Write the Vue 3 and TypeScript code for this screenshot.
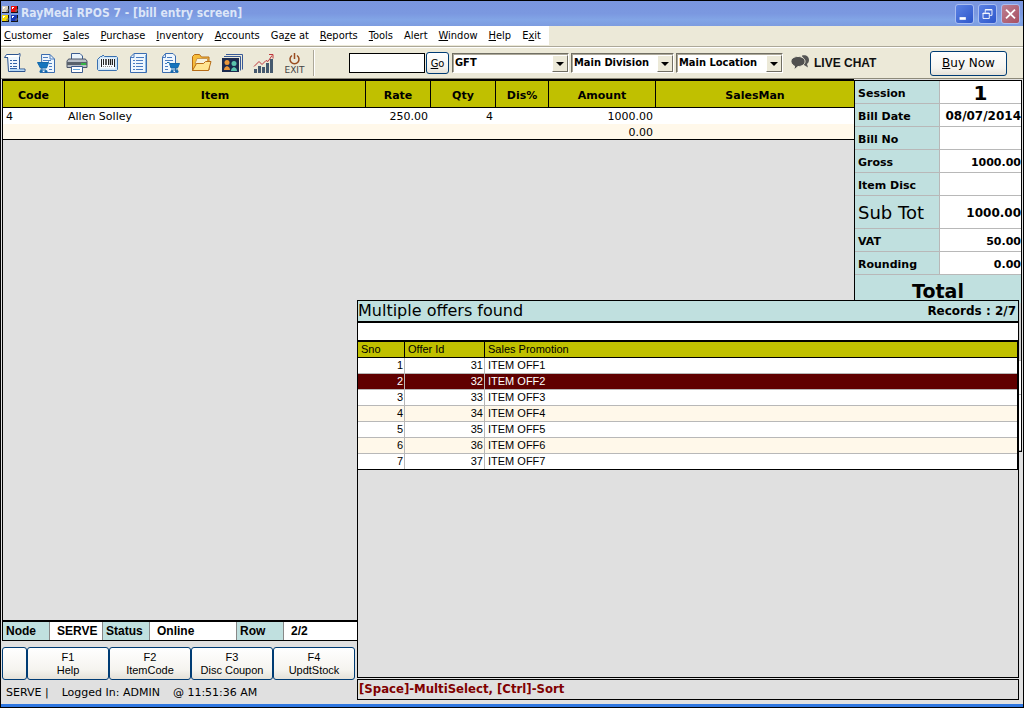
<script setup lang="ts">
import { ref } from 'vue'

interface MenuItem { before: string; key: string; after: string }
interface BillLine { code: string; item: string; rate: string; qty: string; dis: string; amount: string; salesman: string }
interface SummaryRow { label: string; value: string; kind: string }
interface Offer { sno: number; id: number; name: string }

const menu: MenuItem[] = [
  { before: '', key: 'C', after: 'ustomer' },
  { before: '', key: 'S', after: 'ales' },
  { before: '', key: 'P', after: 'urchase' },
  { before: '', key: 'I', after: 'nventory' },
  { before: '', key: 'A', after: 'ccounts' },
  { before: 'Ga', key: 'z', after: 'e at' },
  { before: '', key: 'R', after: 'eports' },
  { before: '', key: 'T', after: 'ools' },
  { before: 'Alert', key: '', after: '' },
  { before: '', key: 'W', after: 'indow' },
  { before: '', key: 'H', after: 'elp' },
  { before: 'E', key: 'x', after: 'it' },
]

const lines: BillLine[] = [
  { code: '4', item: 'Allen Solley', rate: '250.00', qty: '4', dis: '', amount: '1000.00', salesman: '' },
  { code: '', item: '', rate: '', qty: '', dis: '', amount: '0.00', salesman: '' },
]

const summary: SummaryRow[] = [
  { label: 'Session', value: '1', kind: 'session' },
  { label: 'Bill Date', value: '08/07/2014', kind: 'date' },
  { label: 'Bill No', value: '', kind: '' },
  { label: 'Gross', value: '1000.00', kind: '' },
  { label: 'Item Disc', value: '', kind: '' },
  { label: 'Sub Tot', value: '1000.00', kind: 'subtotal' },
  { label: 'VAT', value: '50.00', kind: '' },
  { label: 'Rounding', value: '0.00', kind: '' },
]

const offers: Offer[] = [1, 2, 3, 4, 5, 6, 7].map((n) => ({ sno: n, id: 30 + n, name: `ITEM OFF${n}` }))
const selected = ref(2)
const search = ref('')
const keys = [
  { key: 'F1', label: 'Help' },
  { key: 'F2', label: 'ItemCode' },
  { key: 'F3', label: 'Disc Coupon' },
  { key: 'F4', label: 'UpdtStock' },
]
</script>

<template>
  <div class="window">
    <header class="titlebar">
      <svg class="logo" viewBox="0 0 17 17" aria-hidden="true">
        <path d="M1 1h7v7H1zM10 1h7v7h-7zM1 10h7v7H1zM10 10h7v7h-7z" fill="#141414" />
        <path d="M1 1h6v6H1z" fill="#d8d0c0" />
        <path d="M10 1h6v6h-6z" fill="#e81010" />
        <path d="M1 10h6v6H1z" fill="#f4d800" />
        <path d="M10 10h6v6h-6z" fill="#1838b8" />
        <path d="M2 4V2h2v1H3v1zM11 4V2h2v1h-1v1zM2 13v-2h2v1H3v1zM11 13v-2h2v1h-1v1z" fill="#fff" />
        <path d="M5 6h2V4M14 6h2V4M5 15h2v-2M14 15h2v-2" fill="none" stroke="#777" />
      </svg>
      <h1>RayMedi RPOS 7 - [bill entry screen]</h1>
      <div class="winbtns">
        <button type="button" aria-label="Minimize"><svg viewBox="0 0 19 19"><path d="M4 13h7v3H4z" fill="#fff" /></svg></button>
        <button type="button" aria-label="Restore"><svg viewBox="0 0 19 19"><path d="M7 8V4.500h7.500V11H12M7 5h7" fill="none" stroke="#fff" /><path d="M4.500 8.500h7v6h-7zM4 9h8" fill="none" stroke="#fff" /></svg></button>
        <button type="button" class="close" aria-label="Close"><svg viewBox="0 0 19 19"><path d="M4.500 4.500l10 10M14.500 4.500l-10 10" stroke="#fff" stroke-width="2" /></svg></button>
      </div>
    </header>

    <nav class="menubar">
      <div class="menu">
        <a v-for="m in menu" :key="m.key + m.after + m.before" href="#">{{ m.before }}<u v-if="m.key">{{ m.key }}</u>{{ m.after }}</a>
      </div>
    </nav>

    <div class="toolbar">
      <button type="button" class="tool" aria-label="Bill">
        <svg viewBox="0 0 31 30">
          <path d="M6.500 7.500h12V21H24v2.500H7.500z" fill="#eef6fd" stroke="#2c5590" />
          <path d="M7 9.500H3.500L5.500 6.500H17l2-1v3" fill="#fff" stroke="#2c5590" />
          <path d="M9 12.500h2m1 0h4M9 15.500h2m1 0h4M9 18.500h2m1 0h4M9 20.500h7" stroke="#2f62a8" />
          <path d="M9 22h14" stroke="#7db8ea" />
        </svg>
      </button>
      <button type="button" class="tool" aria-label="Sales bill">
        <svg viewBox="0 0 31 30">
          <path d="M9.500 6.500H18l4.500 4.500v13.500H10z" fill="#eef6fd" stroke="#3a6cb0" />
          <path d="M18 6.500V11h4.500M11 9.500h5M11 12.500h8M17 15.500h3M17 18.500h3M17 21.500h3" fill="none" stroke="#4a7cc0" />
          <path d="M5.500 14.500h11l-2 5.500H8.500z" fill="#1474bd" stroke="#1268ab" />
          <path d="M15 15l2-1.500M8 22h6" fill="none" stroke="#1268ab" /><circle cx="9" cy="23.500" r="1.500" fill="#1268ab" /><circle cx="14" cy="23.500" r="1.500" fill="#1268ab" />
        </svg>
      </button>
      <button type="button" class="tool" aria-label="Print">
        <svg viewBox="0 0 31 30">
          <path d="M8.500 13V5.500H17l2.500 2.500V13" fill="#eaf4fc" stroke="#3c5c90" />
          <path d="M4 13q1-2 2-2h16q1 0 2 2v6.500H4z" fill="#b8bec6" stroke="#4b5568" />
          <path d="M4 15.500h20" stroke="#59616c" stroke-width="3" /><path d="M18 16h5" stroke="#35b545" stroke-width="2" />
          <path d="M8.500 18.500h11v6h-11z" fill="#fff" stroke="#3c5c90" /><path d="M10 21.500h7" stroke="#65a8dc" />
        </svg>
      </button>
      <button type="button" class="tool" aria-label="Barcode">
        <svg viewBox="0 0 31 30">
          <path d="M3.500 11.500l3-3H8l1-1.500 1.500 1.500h12l1 1v12l-1 1h-18l-1-1z" fill="#cfe5f7" stroke="#3970b0" />
          <path d="M6 10.500h15v10H6z" fill="#f7fbff" />
          <path d="M7.500 11v8M9.500 11v6M14.500 11v6M18.500 11v6M20.500 11v8" stroke="#222" /><path d="M12 11v6M16.500 11v6" stroke="#222" stroke-width="1.500" />
          <path d="M9 18.500h10" stroke="#888" stroke-dasharray="1 1" />
        </svg>
      </button>
      <button type="button" class="tool" aria-label="Document">
        <svg viewBox="0 0 31 30">
          <path d="M5.500 9V24.500h16V5.500H9z" fill="#eef6fd" stroke="#3a6cb0" />
          <path d="M5.500 9.500H9v-4M11 9.500h8M8 12.500h2m1 0h7M8 15.500h2m1 0h7M8 18.500h2m1 0h7M8 21.500h2m1 0h7" fill="none" stroke="#4a7cc0" />
          <path d="M20.500 7v17" stroke="#8abbe7" />
        </svg>
      </button>
      <button type="button" class="tool" aria-label="Purchase bill">
        <svg viewBox="0 0 31 30">
          <path d="M6.500 9l3-3.500H17l2.500 2.500V24.500h-13z" fill="#eef6fd" stroke="#3a6cb0" />
          <path d="M6.500 9.500h3v-4M11 9.500h5M9 12.500h8M9 15.500h2M9 18.500h3M9 21.500h3" fill="none" stroke="#4a7cc0" />
          <path d="M13.500 15.500h10l-2 4.500H15z" fill="#1474bd" stroke="#1268ab" />
          <path d="M11 14.500h2.500M15 22h7" fill="none" stroke="#1268ab" /><circle cx="16" cy="23.500" r="1.500" fill="#1268ab" /><circle cx="21" cy="23.500" r="1.500" fill="#1268ab" />
        </svg>
      </button>
      <button type="button" class="tool" aria-label="Open">
        <svg viewBox="0 0 31 30">
          <path d="M5.500 22.500v-14l2-2h5l2 2.500h7.500v13z" fill="#f7bd3b" stroke="#b66c16" />
          <path d="M10 10.500h10.500v5H8z" fill="#f5f1df" stroke="#c89853" />
          <path d="M5.500 22.500l4-7h7l2-2h5.500l-2.500 9z" fill="#ffe491" stroke="#b66c16" />
        </svg>
      </button>
      <button type="button" class="tool" aria-label="Customers">
        <svg viewBox="0 0 31 30">
          <path d="M8 6.500h16.500v15M6 8.500h16.500v14" fill="none" stroke="#385996" />
          <path d="M4 10h17v14H4z" fill="#1b2a4e" />
          <circle cx="9" cy="14.500" r="2.500" fill="#eb9739" /><path d="M6 22q0-3 3-4 3 1 3 4z" fill="#eb9739" />
          <circle cx="16" cy="15.500" r="2.500" fill="#5ac3ad" /><path d="M13 23q0-3 3-4 3 1 3 4z" fill="#5ac3ad" />
        </svg>
      </button>
      <button type="button" class="tool" aria-label="Chart">
        <svg viewBox="0 0 31 30">
          <path d="M5 21h3v4H5zM9 18h3v7H9zM13 19h3v6h-3zM17 15h3v10h-3zM21 11h3v14h-3z" fill="#45596e" />
          <path d="M5 18.500l5-5 3 3 4-4 2 1 4-6M20 6.500h4v4" fill="none" stroke="#bd343b" />
        </svg>
      </button>
      <button type="button" class="tool exit">
        <svg viewBox="0 0 31 18" aria-hidden="true">
          <path d="M12 7.500a4.500 4.500 0 1 0 5 0M14.500 5v6" fill="none" stroke="#9a4d20" stroke-width="1.500" />
        </svg>
        <span>EXIT</span>
      </button>
      <i class="sep"></i>
      <input v-model="search" class="search" type="text" aria-label="Search" />
      <button type="button" class="xp go"><span><u>G</u>o</span></button>
      <div class="combo wide"><select aria-label="Group"><option>GFT</option></select><i></i></div>
      <div class="combo"><select aria-label="Division"><option>Main Division</option></select><i></i></div>
      <div class="combo last"><select aria-label="Location"><option>Main Location</option></select><i></i></div>
      <a class="chat" href="#">
        <svg viewBox="0 0 19 16" aria-hidden="true">
          <path d="M11 .500c4-1 7 1 7 4.500 0 2-1 3.300-2 4l1 3.500-4-2.500z" fill="#555" />
          <path d="M7 1.500c4 0 7 2 7 5s-3 5-7 5L3 15l.5-4C1.500 10 0 8.500 0 6.500c0-3 3-5 7-5z" fill="#505050" stroke="#ece9d8" />
        </svg>
        LIVE CHAT
      </a>
      <button type="button" class="xp buy"><span><u>B</u>uy Now</span></button>
    </div>

    <main class="workspace">
      <section class="left">
        <table class="bill">
          <colgroup>
            <col class="c-code" /><col /><col class="c-rate" /><col class="c-qty" /><col class="c-dis" /><col class="c-amt" /><col class="c-man" />
          </colgroup>
          <thead>
            <tr><th>Code</th><th>Item</th><th>Rate</th><th>Qty</th><th>Dis%</th><th>Amount</th><th>SalesMan</th></tr>
          </thead>
          <tbody>
            <tr v-for="(l, i) in lines" :key="i">
              <td>{{ l.code }}</td><td>{{ l.item }}</td><td class="num">{{ l.rate }}</td><td class="num">{{ l.qty }}</td>
              <td class="num">{{ l.dis }}</td><td class="num">{{ l.amount }}</td><td>{{ l.salesman }}</td>
            </tr>
          </tbody>
        </table>
        <div class="space"></div>
        <dl class="status">
          <dt>Node</dt><dd class="node">SERVE</dd>
          <dt>Status</dt><dd class="online">Online</dd>
          <dt>Row</dt><dd class="row">2/2</dd>
        </dl>
        <div class="fkeys">
          <button type="button" class="xp blank" aria-label="Blank"></button>
          <button v-for="k in keys" :key="k.key" type="button" class="xp fkey"><span>{{ k.key }}</span><span>{{ k.label }}</span></button>
        </div>
        <footer class="login"><span>SERVE |</span><span>Logged In: ADMIN</span><span>@ 11:51:36 AM</span></footer>
      </section>

      <aside class="right">
        <table class="summary">
          <colgroup><col class="s-label" /><col /></colgroup>
          <tbody>
            <tr v-for="s in summary" :key="s.label" :class="s.kind"><th scope="row">{{ s.label }}</th><td>{{ s.value }}</td></tr>
            <tr class="total"><th colspan="2">Total</th></tr>
            <tr class="amount"><td colspan="2"></td></tr>
            <tr class="extra"><td colspan="2"></td></tr>
            <tr class="extra"><td colspan="2"></td></tr>
          </tbody>
        </table>
      </aside>
    </main>

    <section class="popup">
      <div class="panel">
        <div class="pophead"><h2>Multiple offers found</h2><span>Records : {{ selected }}/{{ offers.length }}</span></div>
        <input class="filter" type="text" aria-label="Filter offers" />
        <table class="offers">
          <colgroup><col class="o-sno" /><col class="o-id" /><col /></colgroup>
          <thead><tr><th>Sno</th><th>Offer Id</th><th>Sales Promotion</th></tr></thead>
          <tbody>
            <tr v-for="o in offers" :key="o.id" :class="{ picked: o.sno === selected }" @click="selected = o.sno">
              <td class="num">{{ o.sno }}</td><td class="num">{{ o.id }}</td><td>{{ o.name }}</td>
            </tr>
          </tbody>
        </table>
      </div>
      <p class="hint">[Space]-MultiSelect, [Ctrl]-Sort</p>
    </section>
  </div>
</template>

<style>
html, body { margin: 0; }
</style>

<style scoped>
* { box-sizing: border-box; }
.window {
  position: relative;
  display: flex;
  flex-direction: column;
  min-height: 100vh;
  border: 1px solid #000;
  background: #e0e0e0;
  color: #000;
  font: 11px/15px "DejaVu Sans", Verdana, sans-serif;
}
button, input, select { font: inherit; color: inherit; margin: 0; padding: 0; }
button { cursor: pointer; }
h1, h2, p, dl, dd { margin: 0; }
table { border-collapse: separate; border-spacing: 0; table-layout: fixed; width: 100%; }
th, td { padding: 0; }
svg { display: block; }

.titlebar {
  display: flex;
  align-items: center;
  height: 25px;
  padding: 0 3px 0 0;
  background: linear-gradient(#7a96df, #7b98e0 50%, #82a5e6 75%, #7d9ce0);
}
.logo { width: 17px; height: 17px; }
.titlebar h1 { flex: 1; margin-left: 3px; font: bold 12px/17px "DejaVu Sans Condensed", sans-serif; color: #dce6f8; }
.winbtns { display: flex; gap: 4px; }
.winbtns button { width: 19px; height: 20px; border: 1px solid #a9bdf0; border-radius: 3px; background: linear-gradient(135deg, #5b82e4, #2d56cb); }
.winbtns svg { width: 17px; height: 18px; }
.winbtns .close { background: linear-gradient(135deg, #bd8093, #a84f60); }

.menubar { display: flex; height: 21px; background: #ece9d8; border-bottom: 1px solid #aca899; }
.menu { display: flex; gap: 11px; height: 19px; padding: 0 8px 0 3px; background: #fff; }
.menu a { font: 11px/19px "DejaVu Sans Condensed", Tahoma, sans-serif; color: #000; text-decoration: none; white-space: nowrap; }

.toolbar { display: flex; align-items: center; height: 32px; border-top: 1px solid #fff; border-bottom: 1px solid #8d8a7a; background: #ece9d8; }
.tool { width: 31px; height: 30px; border: 0; background: none; }
.tool svg { width: 31px; height: 30px; }
.tool.exit { display: flex; flex-direction: column; }
.tool.exit svg { height: 18px; }
.tool.exit span { width: 29px; text-align: center; font: 9px/9px "DejaVu Sans", sans-serif; color: #444; }
.sep { width: 2px; height: 26px; margin: 0 34px 0 2px; border-left: 1px solid #aca899; border-right: 1px solid #fff; }
.search { width: 76px; height: 20px; border: 1px solid #000; background: #fff; }
.xp { border: 1px solid #003c74; border-radius: 3px; background: linear-gradient(#fff, #f5f4ef 70%, #e4e1d8); white-space: nowrap; }
.go { width: 23px; height: 22px; margin: 0 3px 0 1px; font-family: "DejaVu Sans Condensed", sans-serif; }
.combo { position: relative; width: 103px; height: 20px; margin-right: 2px; }
.combo.wide { width: 117px; }
.combo.last { width: 107px; }
.combo select {
  appearance: none;
  width: 100%;
  height: 20px;
  padding-left: 2px;
  border: 1px solid;
  border-color: #716f64 #fff #fff #716f64;
  border-radius: 0;
  background: #fff;
  box-shadow: inset 1px 1px 0 #aca899;
  font: bold 11px/16px "DejaVu Sans Condensed", Tahoma, sans-serif;
}
.combo i { position: absolute; top: 2px; right: 1px; width: 16px; height: 17px; border: 1px solid; border-color: #fff #716f64 #716f64 #fff; background: #ece9d8; pointer-events: none; }
.combo i::after { content: ""; position: absolute; top: 6px; left: 3px; border: 4px solid transparent; border-top-color: #000; border-bottom: 0; }
.chat { display: flex; align-items: center; gap: 4px; margin-left: 6px; font: bold 12px/16px "Liberation Sans", Arial, sans-serif; color: #111; text-decoration: none; white-space: nowrap; }
.chat svg { width: 19px; height: 16px; }
.buy { width: 77px; height: 25px; margin: 0 16px 0 auto; font-size: 12px; }

.workspace { flex: 1; display: flex; padding: 0 1px 0 1px; }
.left { flex: 1; min-width: 0; display: flex; flex-direction: column; }
.bill { border: solid #000; border-width: 2px 0 1px 1px; }
.c-code { width: 62px; }
.c-rate, .c-qty { width: 65px; }
.c-dis { width: 53px; }
.c-amt { width: 107px; }
.c-man { width: 198px; }
.bill th { height: 27px; padding-top: 2px; border-right: 1px solid #000; border-bottom: 1px solid #000; background: #c0c000; }
.bill th:last-child { border-right: 0; }
.bill td { height: 16px; padding: 2px 3px 0; background: #fff; line-height: 14px; white-space: nowrap; }
.bill tr:nth-child(2) td { height: 15px; background: #fff8ea; line-height: 13px; }
td.num { text-align: right; }
.space { flex: 1; border-left: 1px solid #000; }
.status { display: flex; height: 21px; border: solid #000; border-width: 2px 0 1px 1px; background: #fff; font: bold 12px/18px "Liberation Sans", Arial, sans-serif; }
.status dt { width: 47px; padding-left: 3px; background: #c0e0df; border-right: 1px solid #888; }
.status dd { padding-left: 7px; border-right: 1px solid #888; }
.status .node { width: 53px; }
.status .online { width: 87px; }
.status .row { flex: 1; }
.fkeys { display: flex; padding-top: 6px; }
.blank { width: 25px; height: 33px; }
.fkey { display: flex; flex-direction: column; align-items: center; justify-content: center; width: 82px; height: 33px; font: 11px/13px "Liberation Sans", Arial, sans-serif; }
.login { display: flex; gap: 13px; height: 24px; padding: 5px 0 0 4px; }

.right { width: 168px; padding-top: 1px; }
.summary { border: 1px solid #000; background: #fff; }
.s-label { width: 85px; }
.summary th, .summary td { height: 23px; padding-top: 2px; border-bottom: 1px solid #b8b8b8; font-weight: bold; white-space: nowrap; }
.summary th { padding-left: 3px; border-right: 1px solid #b8b8b8; background: #c0e0df; text-align: left; }
.summary td { text-align: right; }
.summary .session td { text-align: center; font-size: 20px; line-height: 20px; }
.summary .date td { font-size: 12px; }
.summary .subtotal th, .summary .subtotal td { height: 33px; }
.summary .subtotal th { font-size: 18px; line-height: 22px; font-weight: normal; }
.summary .subtotal td { font-size: 12px; }
.summary .total th { height: 28px; padding: 5px 0 0; border: 0; font-size: 19px; line-height: 23px; text-align: center; vertical-align: top; }
.summary .amount td { height: 58px; background: #d0d0d0; }
.summary .extra td { height: 34px; }
.summary tr:last-child td { height: 56px; }

.popup { position: absolute; top: 299px; right: 4px; bottom: 7px; left: 356px; display: flex; flex-direction: column; gap: 1px; }
.panel { flex: 1; border: 1px solid #000; background: #e0e0e0; }
.pophead { display: flex; align-items: center; justify-content: space-between; height: 22px; padding-right: 2px; border-bottom: 2px solid #000; background: #c0e0df; font-size: 12px; font-weight: bold; }
.pophead h2 { font-size: 16px; line-height: 20px; font-weight: normal; }
.filter { display: block; width: 100%; height: 17px; border: 0; background: #fff; }
.offers { border-top: 2px solid #000; border-bottom: 1px solid #000; border-right: 1px solid #000; background: #fff; font: 11px/15px "Liberation Sans", Arial, sans-serif; }
.o-sno { width: 47px; }
.o-id { width: 80px; }
.offers th { height: 16px; padding-left: 3px; border-right: 1px solid #000; border-bottom: 1px solid #000; background: #c0c000; text-align: left; font-weight: normal; }
.offers td { height: 16px; padding: 0 1px 0 3px; border-right: 1px solid #b8b8b8; border-bottom: 1px solid #b8b8b8; }
.offers th:last-child, .offers td:last-child { border-right: 0; }
.offers tbody tr:nth-child(4) td, .offers tbody tr:nth-child(6) td { background: #fff8ea; }
.offers .picked td { background: #600000; color: #fff; }
.offers tbody tr:last-child td { height: 15px; border-bottom: 0; }
.hint { height: 21px; padding-left: 1px; border: 1px solid #000; background: #e0e0e0; font: bold 13px/18px "DejaVu Sans Condensed", Tahoma, sans-serif; color: #800000; }
.window::after { content: ""; height: 3px; background: #2e76e0; }
</style>
